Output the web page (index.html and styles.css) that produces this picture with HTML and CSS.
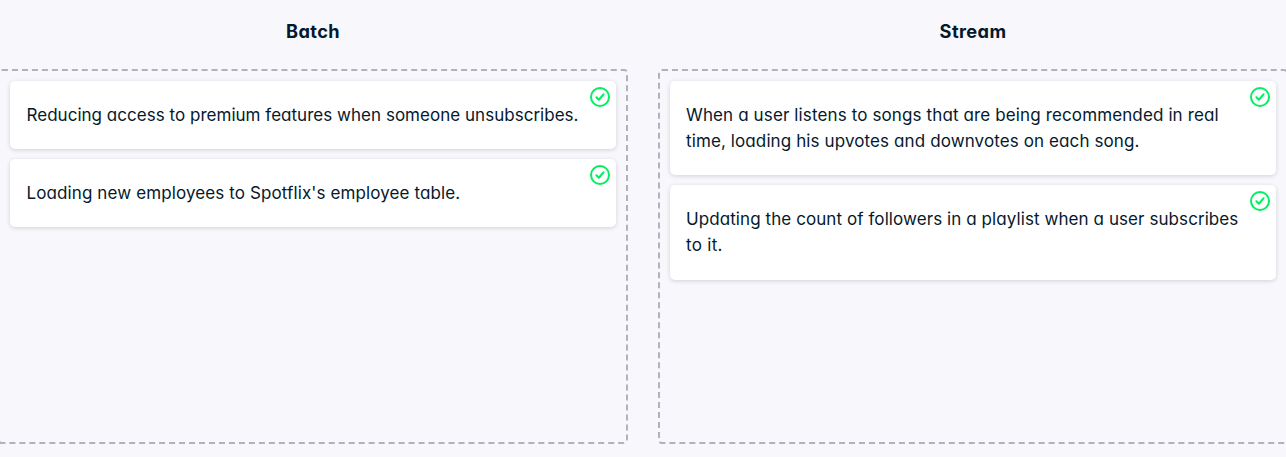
FILE: index.html
```
<!DOCTYPE html>
<html lang="en">
<head>
<meta charset="utf-8">
<title>Batch and Stream</title>
<link rel="stylesheet" href="styles.css">
</head>
<body>
<svg class="symbols" aria-hidden="true">
<symbol id="check" viewBox="0 0 20 20"><circle cx="10" cy="10" r="9" fill="none" stroke="currentColor" stroke-width="2"/><path d="M6.4 10.3 8.9 12.7 13.5 7.4" fill="none" stroke="currentColor" stroke-width="2.1" stroke-linecap="round" stroke-linejoin="round"/></symbol>
</svg>
<main class="board">
<section class="column">
<h2 class="title">Batch</h2>
<div class="zone">
<article class="card"><p class="text"><span class="line l1">Reducing access to premium features when someone unsubscribes.</span></p><svg class="status"><use href="#check"/></svg></article>
<article class="card"><p class="text"><span class="line l2">Loading new employees to Spotflix's employee table.</span></p><svg class="status"><use href="#check"/></svg></article>
</div>
</section>
<section class="column">
<h2 class="title">Stream</h2>
<div class="zone">
<article class="card"><p class="text"><span class="line l3">When a user listens to songs that are being recommended in real</span> <span class="line l4">time, loading his upvotes and downvotes on each song.</span></p><svg class="status"><use href="#check"/></svg></article>
<article class="card"><p class="text"><span class="line l5">Updating the count of followers in a playlist when a user subscribes</span> <span class="line l6">to it.</span></p><svg class="status"><use href="#check"/></svg></article>
</div>
</section>
</main>
</body>
</html>
```
FILE: styles.css
```
* { box-sizing: border-box; }
body {
  margin: 0;
  overflow: hidden;
  background: #f7f7fc;
  color: #05192d;
  font-family: Inter, "Liberation Sans", sans-serif;
  font-feature-settings: "cv11";
}
.symbols { display: none; }
.board {
  display: grid;
  grid-template-columns: 630px 630px;
  gap: 30px;
  width: 1290px;
  height: 457px;
  margin-left: -2px;
}
.column {
  display: grid;
  grid-template-rows: 69px 375px;
}
.title {
  margin: 0;
  padding-top: 18px;
  font-size: 18.2px;
  line-height: 26px;
  font-weight: 700;
  letter-spacing: .4px;
  text-align: center;
}
.zone {
  display: flex;
  flex-direction: column;
  gap: 10px;
  padding: 10px;
  border: 2px dashed #b0b3bd;
  border-radius: 4px;
}
.card {
  position: relative;
  padding: 20.7px 16px 21px;
  border-radius: 5px;
  background: #fff;
  box-shadow: 0 1px 4px rgba(5, 25, 45, .16);
}
.text {
  margin: 0;
  font-size: 17px;
  line-height: 26.3px;
}
.line {
  display: block;
  white-space: nowrap;
}
.l1 { padding-left: .5px; letter-spacing: .025px; }
.l2 { padding-left: .5px; letter-spacing: .11px; }
.l3 { letter-spacing: .125px; }
.l4 { letter-spacing: .11px; }
.l5 { letter-spacing: .08px; }
.l6 { letter-spacing: .3px; }
.status {
  position: absolute;
  top: 6px;
  right: 6px;
  width: 20px;
  height: 20px;
  color: #03ef62;
}
```
